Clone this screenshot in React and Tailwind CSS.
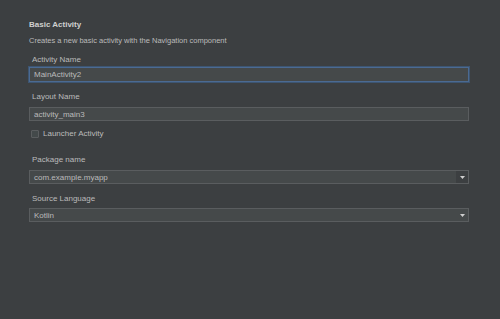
const font = { fontFamily: '"Liberation Sans", Arial, sans-serif' }

function Label({ children, className = '' }) {
    return <div className={`h-[12px] leading-[12px] pl-[3px] text-[8px] text-[#bbbbbb] ${className}`}>{children}</div>
}

function TextInput({ value, focused, className = '' }) {
    return (
        <div className={`flex items-center px-[4px] pt-[1px] bg-[#45494a] border ${focused ? 'border-[#4b6a92] ring-1 ring-[#3d5571]' : 'border-[#5a5d5f]'} text-[8px] text-[#bbbbbb] ${className}`}>
            {value}
        </div>
    )
}

function Select({ value, boxed, className = '' }) {
    return (
        <div className={`flex items-stretch bg-[#45494a] border border-[#5a5d5f] text-[8px] text-[#bbbbbb] ${className}`}>
            <div className="flex-1 flex items-center px-[4px] pt-[1px]">{value}</div>
            <div className={`w-[12px] flex items-center justify-center ${boxed ? 'bg-[#3c3f41]' : ''}`}>
                <svg width="5" height="3" viewBox="0 0 5 3"><path d="M0 0h5L2.5 3z" fill="#cfcfcf" /></svg>
            </div>
        </div>
    )
}

export default function App() {
    return (
        <div className="w-[500px] h-[319px] bg-[#3c3f41] pl-[29px] pr-[31px] pt-[19px]" style={font}>
            <div className="h-[12px] leading-[12px] text-[8px] font-bold text-[#d0d0d0]">Basic Activity</div>
            <div className="mt-[4px] h-[12px] leading-[12px] text-[7.5px] text-[#bbbbbb]">Creates a new basic activity with the Navigation component</div>

            <Label className="mt-[7px]">Activity Name</Label>
            <TextInput value="MainActivity2" focused className="mt-[1px] h-[15px]" />

            <Label className="mt-[9px]">Layout Name</Label>
            <TextInput value="activity_main3" className="mt-[4px] h-[14px]" />

            <div className="mt-[7px] h-[12px] flex items-center gap-[4px] pl-[2px]">
                <div className="w-[8px] h-[8px] border border-[#5a5d5f] bg-[#43494a] rounded-[1px]" />
                <span className="text-[8px] text-[#bbbbbb]">Launcher Activity</span>
            </div>

            <Label className="mt-[14px]">Package name</Label>
            <Select value="com.example.myapp" boxed className="mt-[4px] h-[14px]" />

            <Label className="mt-[9px]">Source Language</Label>
            <Select value="Kotlin" className="mt-[3px] h-[14px]" />
        </div>
    )
}
